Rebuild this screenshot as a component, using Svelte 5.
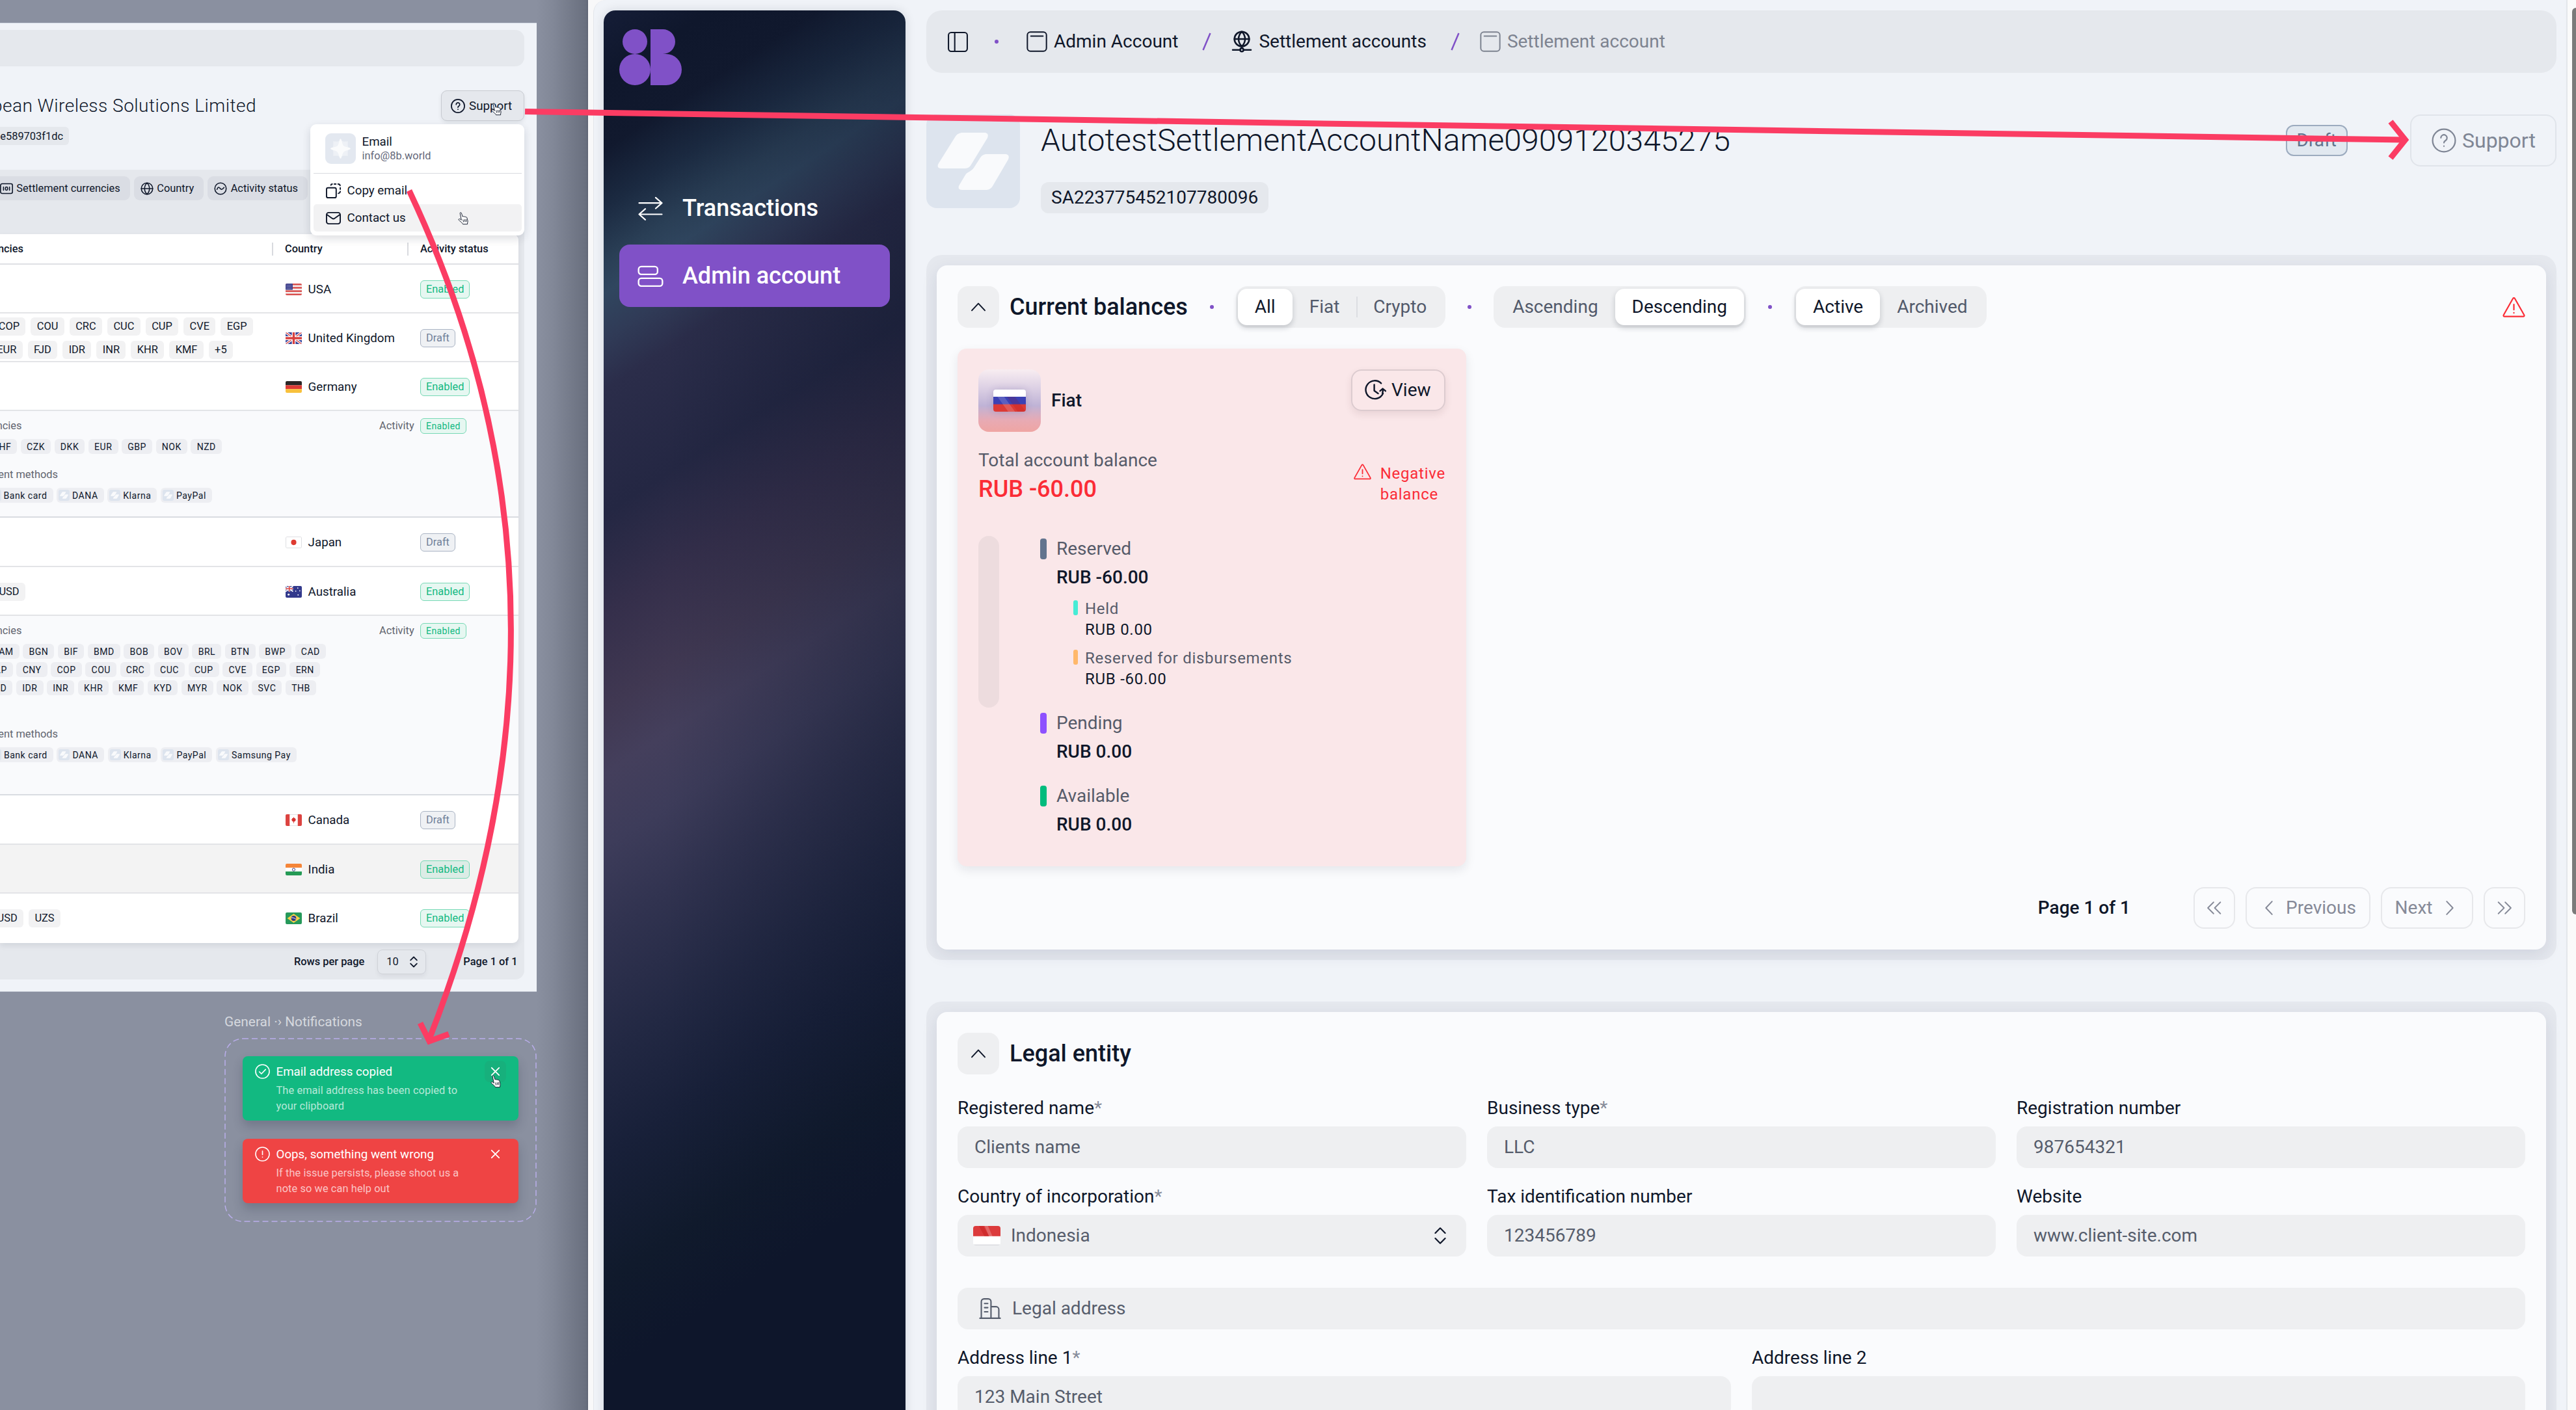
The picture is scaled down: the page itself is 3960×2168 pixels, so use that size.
<script lang="ts">
    const headerCrumbs = [
        { icon: 'window', label: 'Admin Account', muted: false },
        { icon: 'network', label: 'Settlement accounts', muted: false },
        { icon: 'window', label: 'Settlement account', muted: true }
    ];

    const filters = [
        { icon: 'cash', label: 'Settlement currencies' },
        { icon: 'globe', label: 'Country' },
        { icon: 'activity', label: 'Activity status' }
    ];

    type Chip = string;
    type Row = {
        country?: string;
        flag?: string;
        status: 'Enabled' | 'Draft';
        chips?: Chip[][];
        ends?: number[];
        methods?: string[];
        methodsEnd?: number;
        height: number;
        hovered?: boolean;
    };

    const rows: Row[] = [
        { country: 'USA', flag: 'us', status: 'Enabled', height: 75 },
        {
            country: 'United Kingdom', flag: 'gb', status: 'Draft', height: 75,
            chips: [
                ['COP', 'COU', 'CRC', 'CUC', 'CUP', 'CVE', 'EGP'],
                ['EUR', 'FJD', 'IDR', 'INR', 'KHR', 'KMF', '+5']
            ],
            ends: [389, 358]
        },
        { country: 'Germany', flag: 'de', status: 'Enabled', height: 75 },
        {
            status: 'Enabled', height: 164,
            chips: [['CHF', 'CZK', 'DKK', 'EUR', 'GBP', 'NOK', 'NZD']],
            ends: [341],
            methods: ['Bank card', 'DANA', 'Klarna', 'PayPal'], methodsEnd: 326
        },
        { country: 'Japan', flag: 'jp', status: 'Draft', height: 75.5 },
        { country: 'Australia', flag: 'au', status: 'Enabled', height: 75.5, chips: [['USD']], ends: [39] },
        {
            status: 'Enabled', height: 276,
            chips: [
                ['BAM', 'BGN', 'BIF', 'BMD', 'BOB', 'BOV', 'BRL', 'BTN', 'BWP', 'CAD'],
                ['CLP', 'CNY', 'COP', 'COU', 'CRC', 'CUC', 'CUP', 'CVE', 'EGP', 'ERN'],
                ['FJD', 'IDR', 'INR', 'KHR', 'KMF', 'KYD', 'MYR', 'NOK', 'SVC', 'THB']
            ],
            ends: [501, 492, 486],
            methods: ['Bank card', 'DANA', 'Klarna', 'PayPal', 'Samsung Pay'], methodsEnd: 456
        },
        { country: 'Canada', flag: 'ca', status: 'Draft', height: 75.5 },
        { country: 'India', flag: 'in', status: 'Enabled', height: 75, hovered: true },
        { country: 'Brazil', flag: 'br', status: 'Enabled', height: 76.5, chips: [['USD', 'UZS']], ends: [93] }
    ];

    const toasts = [
        { kind: 'success', icon: 'check', title: 'Email address copied', lines: ['The email address has been copied to', 'your clipboard'] },
        { kind: 'error', icon: 'alert', title: 'Oops, something went wrong', lines: ['If the issue persists, please shoot us a', 'note so we can help out'] }
    ];

    const segments = [
        { items: ['All', 'Fiat', 'Crypto'], active: 'All' },
        { items: ['Ascending', 'Descending'], active: 'Descending' },
        { items: ['Active', 'Archived'], active: 'Active' }
    ];

    const legend = [
        {
            name: 'Reserved', value: 'RUB -60.00', color: 'slate',
            children: [
                { name: 'Held', value: 'RUB 0.00', color: 'teal' },
                { name: 'Reserved for disbursements', value: 'RUB -60.00', color: 'orange' }
            ]
        },
        { name: 'Pending', value: 'RUB 0.00', color: 'violet', children: [] },
        { name: 'Available', value: 'RUB 0.00', color: 'green', children: [] }
    ];

    const fields = [
        { label: 'Registered name', required: true, value: 'Clients name' },
        { label: 'Business type', required: true, value: 'LLC' },
        { label: 'Registration number', value: '987654321' },
        { label: 'Country of incorporation', required: true, value: 'Indonesia', flag: 'id' },
        { label: 'Tax identification number', value: '123456789' },
        { label: 'Website', value: 'www.client-site.com' }
    ];

    const addressFields = [
        { label: 'Address line 1', required: true, value: '123 Main Street' },
        { label: 'Address line 2', value: '' }
    ];
</script>

{#snippet icon(name: string, size: number, stroke: number = 1.5)}
    <svg class="icon" width={size} height={size} viewBox="0 0 24 24" fill="none" stroke="currentColor" stroke-width={stroke} stroke-linecap="round" stroke-linejoin="round">
        {#if name === 'help'}
            <circle cx="12" cy="12" r="11" />
            <path d="M9 9.4a3 3 0 1 1 4.6 2.6c-1 .6-1.600 1.100-1.600 2.200M12 17.500v.1" />
        {:else if name === 'window'}
            <rect x="1" y="1" width="22" height="22" rx="3.500" />
            <path d="M5 5.700h14" />
        {:else if name === 'panel'}
            <rect x="1.500" y="1.500" width="21" height="21" rx="3" />
            <path d="M8.500 1.500v21" />
        {:else if name === 'network'}
            <circle cx="12" cy="9" r="8.500" />
            <path d="M3.500 9h17M12 .5c-5 5-5 12 0 17M12 .5c5 5 5 12 0 17M12 17.500v2M1.500 21.500h8.500M14 21.500h8.500" />
            <circle cx="12" cy="21.500" r="1.900" />
        {:else if name === 'cash'}
            <rect x="1" y="3" width="22" height="18" rx="3" />
            <path d="M6.500 9v6M17.500 9v6" />
            <rect x="10" y="9" width="4" height="6" rx="2" />
        {:else if name === 'globe'}
            <circle cx="12" cy="12" r="10.500" />
            <path d="M1.500 12h21M12 1.500c-6 6-6 15 0 21M12 1.500c6 6 6 15 0 21" />
        {:else if name === 'activity'}
            <circle cx="12" cy="12" r="10.500" />
            <path d="M5.500 13.500c2-5 3.500-4.500 5.500-2s3.500 3.500 7.500-1.500" />
        {:else if name === 'copy'}
            <rect x="1" y="7" width="15.500" height="16" rx="2.500" />
            <path d="M8 2.800C8.300 1.500 9 1 10.200 1M13.500 1h2.500M19.500 1c2 0 3 .8 3.300 2.500M23 7v2.500M23 13c-.3 2-1.200 2.800-3 3" />
        {:else if name === 'mail'}
            <rect x="1" y="3" width="22" height="18" rx="3.500" />
            <path d="M2 6.500l8 5.800c1.300.9 2.700.9 4 0l8-5.800" />
        {:else if name === 'check'}
            <circle cx="12" cy="12" r="11" />
            <path d="M7 12.500l3.400 3.200L17 8.800" />
        {:else if name === 'alert'}
            <circle cx="12" cy="12" r="11" />
            <path d="M12 7v6M12 16.700v.3" />
        {:else if name === 'close'}
            <path d="M4 4l16 16M20 4L4 20" />
        {:else if name === 'warning'}
            <path d="M12 2.200c.5 0 .8.2 1 .6l9.800 17.300c.5.900 0 1.600-1 1.600H2.200c-1 0-1.500-.7-1-1.600L11 2.800c.2-.4.5-.6 1-.6zM12 9v5.500M12 17.800v.2" />
        {:else if name === 'swap'}
            <path d="M1.500 7.300h21M16.800 2.300l5.700 5-5.700 5M22.500 17.700h-21M7.200 12.700l-5.700 5 5.700 5" />
        {:else if name === 'stack'}
            <rect x="1" y="3.500" width="17.500" height="7.200" rx="2.500" />
            <rect x="1" y="14.300" width="22" height="7.200" rx="2.500" />
        {:else if name === 'history'}
            <path d="M18.500 4.500A9.800 9.800 0 1 0 20.500 15.500M11 6v6.500l4.200 3M17.300 12.800l2.900-2.500 3 2.500M20.200 10.500c.3 2 .2 3.500-.3 5" />
        {:else if name === 'up'}
            <path d="M4.500 16L12 8l7.500 8" />
        {:else if name === 'updown'}
            <path d="M5.500 8.500L12 2l6.500 6.500M5.500 15.500L12 22l6.500-6.500" />
        {:else if name === 'left'}
            <path d="M16 3.500L8 12l8 8.500" />
        {:else if name === 'right'}
            <path d="M8 3.500l8 8.500-8 8.500" />
        {:else if name === 'first'}
            <path d="M11 4.500L3.500 12l7.500 7.500M20 4.500L12.500 12l7.500 7.500" />
        {:else if name === 'last'}
            <path d="M4 4.500l7.500 7.500L4 19.500M13 4.500l7.500 7.500-7.500 7.500" />
        {:else if name === 'building'}
            <path d="M1 22.500h22M2.500 22.500v-18a3 3 0 0 1 3-3h4.500a3 3 0 0 1 3 3v18M13 10h5.500a3 3 0 0 1 3 3v9.500M6 6.500h3.500M6 11h3.500M6 15.500h3.500" />
        {/if}
    </svg>
{/snippet}

{#snippet flag(code: string)}
    <svg class="flag" viewBox="0 0 24 17" preserveAspectRatio="none">
        {#if code === 'us'}
            <rect width="24" height="17" fill="#f5f0f0" />
            {#each [0, 4.9, 9.8, 14.700] as y}
                <rect {y} width="24" height="2.400" fill="#d9504e" />
            {/each}
            <rect width="10.500" height="9" fill="#3b3f8c" />
            <path d="M1.500 2.200h8M1.500 4.500h8M1.500 6.800h8" stroke="#c9c9e6" stroke-width=".8" stroke-dasharray="1 1" />
        {:else if code === 'gb'}
            <rect width="24" height="17" fill="#34439a" />
            <path d="M0 0l24 17M24 0L0 17" stroke="#fff" stroke-width="3.600" />
            <path d="M0 0l24 17M24 0L0 17" stroke="#d8403f" stroke-width="1.300" />
            <path d="M12 0v17M0 8.500h24" stroke="#fff" stroke-width="5.500" />
            <path d="M12 0v17M0 8.500h24" stroke="#d8403f" stroke-width="3.200" />
        {:else if code === 'de'}
            <rect width="24" height="6" fill="#2a2626" />
            <rect y="6" width="24" height="5.500" fill="#dd3a35" />
            <rect y="11.500" width="24" height="5.500" fill="#f8c13c" />
        {:else if code === 'jp'}
            <rect x=".5" y=".5" width="23" height="16" rx="1.500" fill="#fff" stroke="#dfe0e3" />
            <circle cx="12" cy="8.500" r="3.900" fill="#de3a30" />
        {:else if code === 'au'}
            <rect width="24" height="17" fill="#32398c" />
            <path d="M0 0l11 8M11 0L0 8" stroke="#fff" stroke-width="1.600" />
            <path d="M5.500 0v8M0 4h11" stroke="#fff" stroke-width="2.800" />
            <path d="M5.500 0v8M0 4h11" stroke="#d8403f" stroke-width="1.500" />
            <g fill="#fff">
                <circle cx="4.500" cy="12.500" r="1.400" /><circle cx="18" cy="3" r=".8" /><circle cx="21" cy="7" r=".8" />
                <circle cx="15" cy="7.500" r=".8" /><circle cx="18.500" cy="13" r=".9" />
            </g>
        {:else if code === 'ca'}
            <rect width="24" height="17" fill="#fff" />
            <path d="M6 .4h12M6 16.600h12" stroke="#dadbdf" stroke-width=".8" />
            <rect width="6" height="17" fill="#dc4340" /><rect x="18" width="6" height="17" fill="#dc4340" />
            <path d="M12 4l1.200 2 1.300-.4-.3 2 1.600-.2-2.300 3.300h-1.100V13h-.8v-2.300h-1.100L8.200 7.400l1.600.2-.3-2 1.300.4z" fill="#d7302d" />
        {:else if code === 'in'}
            <rect width="24" height="6" fill="#f58538" />
            <rect y="6" width="24" height="5.300" fill="#fff" />
            <rect y="11.300" width="24" height="5.700" fill="#249a55" />
            <circle cx="12" cy="8.600" r="2" fill="none" stroke="#33347f" stroke-width=".9" />
        {:else if code === 'br'}
            <rect width="24" height="17" fill="#26995a" />
            <path d="M12 2l9.500 6.500L12 15 2.500 8.500z" fill="#f8cf4a" />
            <circle cx="12" cy="8.500" r="3.700" fill="#31377f" />
            <path d="M8.600 7.500c2.500 0 5 .8 6.800 2.400" stroke="#fff" stroke-width=".9" fill="none" />
        {:else if code === 'ru'}
            <rect width="24" height="6" fill="#fff" />
            <rect y="5.500" width="24" height="6" fill="#3c41b4" />
            <rect y="11.300" width="24" height="5.700" fill="#dc3a35" />
            <path d="M3 5.500h5l8 11.500h-5z" fill="#fff" opacity=".16" />
            <path d="M10 5.500h6l8 11.500h-6z" fill="#900" opacity=".14" />
        {:else if code === 'id'}
            <rect width="24" height="9" fill="#dc3b3c" />
            <rect y="9" width="24" height="8" fill="#fff" />
            <path d="M5 0h4l5 9h-4z" fill="#a00" opacity=".25" />
            <path d="M10 0h3l4 9h-3z" fill="#fff" opacity=".22" />
            <path d="M0 16.600h24" stroke="#dadbdf" stroke-width="1" />
        {/if}
    </svg>
{/snippet}

{#snippet stripes()}
    <svg class="stripes" viewBox="0 0 144 144" fill="#f9fafc">
        <path d="M56 28h33c5 0 7 3 5 8L69 77c-3 5-6 6-11 6H23c-5 0-7-3-4-8l25-40c3-5 7-7 12-7z" />
        <path d="M93 61h28c5 0 7 3 5 8l-24 41c-3 5-7 6-11 6H55c-5 0-7-3-4-8l9-15c3-5 9-5 13-11l9-14c3-5 6-7 11-7z" />
    </svg>
{/snippet}

{#snippet hand()}
    <svg class="hand" viewBox="0 0 18 20" fill="#fff" stroke="#1b2233" stroke-width="1" stroke-linejoin="round">
        <path d="M4.200 2.200c-.4-1.600 1.700-2 2.100-.6l1.900 5.600c.6-1 2-.8 2.300.2.700-.8 2-.5 2.200.5.900-.5 2 0 2.200 1.100l1.200 4.700c.3 1.300-.4 2.200-.5 3.200v1.800H8.500c-.6-1.900-2.700-3.400-4.500-4.800-.9-.7-2.300-1.700-1.900-2.700.4-.9 1.700-.7 2.500-.1l1.700 1.200z" />
        <path d="M8.700 11.500l1 4M11.200 11.200l.8 4M13.500 11l.5 4" />
    </svg>
{/snippet}

{#snippet chip(label: string, method: boolean = false)}
    <span class="chip" class:method>
        {#if method}<span class="method-logo">{@render stripes()}</span>{/if}{label}
    </span>
{/snippet}

<div class="screen">
    <section class="canvas">
        <div class="artboard">
            <div class="board-bar"></div>
            <div class="board-heading">
                <div class="board-title">Pan-European Wireless Solutions Limited</div>
                <button class="board-support">
                    {@render icon('help', 22, 1.9)}<span>Support</span>
                    <span class="cursor on-support">{@render hand()}</span>
                </button>
            </div>
            <div class="board-id"><span>e589703f1dc</span></div>

            <div class="board-panel">
                <div class="filters">
                    {#each filters as filter}
                        <span class="filter">{@render icon(filter.icon, 20, 1.9)}{filter.label}</span>
                    {/each}
                </div>
                <div class="table">
                    <div class="table-head">
                        <span class="head-left">Currencies</span>
                        <span class="head-cell country">Country</span>
                        <span class="head-cell">Activity status</span>
                    </div>
                    {#each rows as row}
                        {#if row.country}
                            <div class="row" class:hovered={row.hovered} style="height: {row.height}px">
                                <div class="row-chips">
                                    {#each row.chips ?? [] as line, i}
                                        <div class="chip-line" style="width: {row.ends?.[i]}px">
                                            {#each line as code}{@render chip(code)}{/each}
                                        </div>
                                    {/each}
                                </div>
                                <div class="row-country">{@render flag(row.flag ?? '')}{row.country}</div>
                                <span class="badge {row.status.toLowerCase()}">{row.status}</span>
                            </div>
                        {:else}
                            <div class="detail" style="height: {row.height}px">
                                <div class="detail-top">
                                    <span class="detail-label currencies">Currencies</span>
                                    <span class="detail-activity">Activity</span>
                                    <span class="badge small enabled">{row.status}</span>
                                </div>
                                <div class="detail-chips">
                                    {#each row.chips ?? [] as line, i}
                                        <div class="chip-line" style="width: {row.ends?.[i]}px">
                                            {#each line as code}{@render chip(code)}{/each}
                                        </div>
                                    {/each}
                                </div>
                                <div class="detail-methods" class:spaced={row.height > 200}>
                                    <span class="detail-label methods">Payment methods</span>
                                    <div class="chip-line" style="width: {row.methodsEnd}px">
                                        {#each row.methods ?? [] as method}{@render chip(method, true)}{/each}
                                    </div>
                                </div>
                            </div>
                        {/if}
                    {/each}
                </div>
                <div class="table-footer">
                    <span>Rows per page</span>
                    <span class="page-size">10 {@render icon('updown', 18, 2.4)}</span>
                    <span class="page-of">Page 1 of 1</span>
                </div>
            </div>

            <div class="menu">
                <div class="menu-contact">
                    <div class="menu-logo">
                        <svg viewBox="0 0 46 46">
                            <path d="M23 9c2 5 9 3 11 3 0 3-1 8 2 11-3 3-2 8-2 11-3 0-8-1-11 2-3-3-8-2-11-2 0-3 1-8-2-11 3-3 2-8 2-11 3 0 9 2 11-3z" fill="#eef1f6" />
                            <path d="M23 8c2 0 2 9 5 11 3 2 10 2 10 4s-7 2-10 5c-3 3-3 10-5 10s-2-7-5-10c-3-3-10-3-10-5s7-2 10-4c3-2 3-11 5-11z" fill="#fafbfc" />
                        </svg>
                    </div>
                    <div>
                        <div class="menu-title">Email</div>
                        <div class="menu-mail">info@8b.world</div>
                    </div>
                </div>
                <div class="menu-item">{@render icon('copy', 23, 2)}Copy email</div>
                <div class="menu-item hovered">
                    {@render icon('mail', 23, 2)}Contact us
                    <span class="cursor on-contact">{@render hand()}</span>
                </div>
            </div>
        </div>

        <div class="notes">
            <div class="notes-title">General ·› Notifications</div>
            <div class="notes-frame">
                <svg class="dashes" width="480" height="283"><rect x="1" y="1" width="478" height="281" rx="27" /></svg>
                {#each toasts as toast}
                    <div class="toast {toast.kind}">
                        <div class="toast-icon">{@render icon(toast.icon, 23, 1.7)}</div>
                        <div class="toast-body">
                            <div class="toast-title">{toast.title}</div>
                            {#each toast.lines as line}<div class="toast-line">{line}</div>{/each}
                        </div>
                        <div class="toast-close">
                            {@render icon('close', 17, 2.6)}
                            {#if toast.kind === 'success'}<span class="cursor on-close">{@render hand()}</span>{/if}
                        </div>
                    </div>
                {/each}
            </div>
        </div>
    </section>

    <section class="browser">
        <div class="page">
            <aside class="sidebar">
                <svg class="logo" width="96" height="86" viewBox="0 0 96 86" fill="#8051c7">
                    <circle cx="24" cy="19" r="19" /><circle cx="24" cy="62" r="24" />
                    <path d="M48 0h19a19 19 0 0 1 0 38h5a24 24 0 0 1 0 48H48z" />
                </svg>
                <nav>
                    <a class="nav-item" href="#transactions">{@render icon('swap', 40, 1.3)}Transactions</a>
                    <a class="nav-item active" href="#admin">{@render icon('stack', 40, 1.4)}Admin account</a>
                </nav>
            </aside>

            <main>
                <header class="topbar">
                    {@render icon('panel', 33, 1.5)}
                    <span class="dot"></span>
                    {#each headerCrumbs as crumb, i}
                        {#if i > 0}
                            <svg class="slash" width="14" height="28"><path d="M1.500 27L12.500 1" stroke="#8051c7" stroke-width="2.500" /></svg>
                        {/if}
                        <span class="crumb" class:muted={crumb.muted}>{@render icon(crumb.icon, 32, crumb.icon === 'network' ? 1.9 : 1.5)}{crumb.label}</span>
                    {/each}
                </header>

                <div class="account">
                    <div class="account-logo">{@render stripes()}</div>
                    <div class="account-info">
                        <div class="account-line">
                            <h1>AutotestSettlementAccountName0909120345275</h1>
                            <span class="account-status">Draft</span>
                            <button class="support">{@render icon('help', 38, 1.4)}Support</button>
                        </div>
                        <span class="account-id">SA223775452107780096</span>
                    </div>
                </div>

                <section class="panel">
                    <div class="panel-body balances">
                        <div class="panel-head">
                            <span class="collapse">{@render icon('up', 32, 1.5)}</span>
                            <h2>Current balances</h2>
                            {#each segments as segment}
                                <span class="dot"></span>
                                <div class="segment">
                                    {#each segment.items as item}
                                        <span class="seg-item" class:active={item === segment.active} class:divided={item === 'Crypto'}>{item}</span>
                                    {/each}
                                </div>
                            {/each}
                            <span class="panel-warning">{@render icon('warning', 35, 1.5)}</span>
                        </div>

                        <article class="card">
                            <div class="card-top">
                                <div class="card-flag">{@render flag('ru')}</div>
                                <strong>Fiat</strong>
                                <button class="view">{@render icon('history', 34, 1.7)}View</button>
                            </div>
                            <div class="card-total">
                                <div>
                                    <div class="total-label">Total account balance</div>
                                    <div class="total-value">RUB -60.00</div>
                                </div>
                                <div class="negative">{@render icon('warning', 27, 1.6)}<span>Negative<br />balance</span></div>
                            </div>
                            <div class="card-split">
                                <div class="split-bar"></div>
                                <div class="legend">
                                    {#each legend as entry}
                                        <div class="entry">
                                            <div class="entry-name"><i class="mark {entry.color}"></i>{entry.name}</div>
                                            <div class="entry-value">{entry.value}</div>
                                            {#if entry.children.length}
                                                <div class="children">
                                                    {#each entry.children as child}
                                                        <div class="child">
                                                            <div class="child-name"><i class="mark thin {child.color}"></i>{child.name}</div>
                                                            <div class="child-value">{child.value}</div>
                                                        </div>
                                                    {/each}
                                                </div>
                                            {/if}
                                        </div>
                                    {/each}
                                </div>
                            </div>
                        </article>

                        <div class="pagination">
                            <strong>Page 1 of 1</strong>
                            <button class="square">{@render icon('first', 28, 1.6)}</button>
                            <button class="prev">{@render icon('left', 28, 1.7)}Previous</button>
                            <button class="next">Next{@render icon('right', 28, 1.7)}</button>
                            <button class="square">{@render icon('last', 28, 1.6)}</button>
                        </div>
                    </div>
                </section>

                <section class="panel legal">
                    <div class="panel-body">
                        <div class="panel-head">
                            <span class="collapse">{@render icon('up', 32, 1.5)}</span>
                            <h2>Legal entity</h2>
                        </div>
                        <div class="fields">
                            {#each fields as field}
                                <div class="field">
                                    <div class="label">{field.label}{#if field.required}<sup>*</sup>{/if}</div>
                                    <div class="input">
                                        {#if field.flag}{@render flag(field.flag)}{/if}
                                        <span>{field.value}</span>
                                        {#if field.flag}{@render icon('updown', 28, 1.9)}{/if}
                                    </div>
                                </div>
                            {/each}
                        </div>
                        <div class="input address-head">{@render icon('building', 34, 1.5)}<span>Legal address</span></div>
                        <div class="fields two">
                            {#each addressFields as field}
                                <div class="field">
                                    <div class="label">{field.label}{#if field.required}<sup>*</sup>{/if}</div>
                                    <div class="input"><span>{field.value}</span></div>
                                </div>
                            {/each}
                        </div>
                    </div>
                </section>
            </main>
        </div>
        <div class="scroll-track"><div class="scroll-thumb"></div></div>
    </section>

    <svg class="annotations" width="3960" height="2168" fill="none" stroke="#fb3c63" stroke-width="9">
        <path d="M807 171.500L3697 215" />
        <path d="M3675 187l22.500 28-22.500 28" />
        <path d="M629 293Q926 922 659 1600" />
        <path d="M646 1573l14 28 30-11" />
    </svg>
</div>

<style>
    :global(body) {
        margin: 0;
        overflow: hidden;
    }

    .screen {
        position: relative;
        display: flex;
        width: 3960px;
        height: 2168px;
        overflow: hidden;
        background: #8a90a0;
        color: #0f172a;
        font-family: Roboto, 'Liberation Sans', sans-serif;
        font-size: 28px;
        line-height: 40px;
    }

    .screen *,
    .screen :global(svg) {
        box-sizing: border-box;
        flex-shrink: 0;
    }

    button {
        font: inherit;
        color: inherit;
        background: none;
        padding: 0;
        white-space: nowrap;
    }

    .icon,
    .flag,
    .stripes,
    .hand {
        display: block;
    }

    .icon {
        overflow: visible;
    }

    .annotations {
        position: absolute;
        inset: 0;
    }

    /* design canvas on the left */
    .canvas {
        width: 904px;
        padding-top: 35px;
        background: linear-gradient(90deg, transparent 825px, rgba(70, 76, 90, 0.12) 850px, rgba(70, 76, 90, 0.5) 904px);
        font-size: 18.75px;
        line-height: 24px;
    }

    .artboard {
        position: relative;
        width: 825px;
        height: 1490px;
        padding: 10px 19px 0 0;
        background: #f0f3f8;
        border-top: 1px solid #d3dae5;
        border-bottom: 1px solid #ccd2dc;
    }

    .board-bar {
        height: 56px;
        border-radius: 0 14px 14px 0;
        background: #e5e8ed;
    }

    .board-heading {
        display: flex;
        align-items: center;
        height: 47px;
        margin-top: 37px;
    }

    .board-title {
        display: flex;
        justify-content: flex-end;
        width: 394px;
        font-size: 28.1px;
        font-weight: 300;
        letter-spacing: 0.45px;
        white-space: nowrap;
    }

    .board-support {
        position: relative;
        display: flex;
        align-items: center;
        gap: 6px;
        width: 128px;
        height: 47px;
        margin-left: auto;
        padding-left: 14px;
        border: 1.5px solid #c8cbd1;
        border-radius: 9px;
        background: #e5e8ed;
        box-shadow: 0 3px 6px rgba(15, 23, 42, 0.08);
    }

    .board-id {
        display: flex;
        justify-content: flex-end;
        width: 106px;
        height: 28px;
        margin-top: 9px;
        padding-right: 9px;
        border-radius: 0 6px 6px 0;
        background: #e5e8ed;
        font-size: 16.4px;
        line-height: 29px;
    }

    .board-panel {
        height: 1245px;
        margin-top: 38px;
        padding: 10px 9px 0 0;
        border-radius: 0 0 14px 0;
        background: #e5e8ed;
    }

    .filters {
        display: flex;
        justify-content: flex-end;
        gap: 6px;
        width: 473px;
        height: 37px;
    }

    .filter {
        display: flex;
        align-items: center;
        gap: 5.5px;
        padding: 0 15px 0 10px;
        border-radius: 9px;
        background: #dadde4;
        font-size: 16.4px;
        white-space: nowrap;
    }

    .table {
        height: 1090px;
        margin-top: 52px;
        border-radius: 0 9px 9px 0;
        background: #fff;
        box-shadow: 0 4px 10px rgba(15, 23, 42, 0.09);
        overflow: hidden;
    }

    .table-head {
        display: flex;
        align-items: center;
        height: 47px;
        padding-top: 1px;
        border-bottom: 2px solid #dfe0e4;
        font-size: 16.4px;
        font-weight: 500;
    }

    .head-left {
        display: flex;
        justify-content: flex-end;
        width: 36px;
        margin-right: 382px;
    }

    .head-cell {
        height: 20px;
        padding-left: 18px;
        border-left: 2px solid #d8dadf;
        line-height: 20px;
    }

    .head-cell.country {
        width: 208px;
    }

    .row {
        display: flex;
        align-items: center;
        padding-top: 3px;
        border-bottom: 2px solid #e3e4e7;
    }

    .row:last-child {
        padding-top: 1px;
        border: 0;
    }

    .row.hovered {
        background: #f3f3f3;
    }

    .row-chips {
        display: flex;
        flex-direction: column;
        gap: 8px;
        width: 439px;
    }

    .chip-line {
        display: flex;
        justify-content: flex-end;
        gap: 8px;
        height: 28px;
    }

    .chip {
        display: flex;
        align-items: center;
        padding: 0 9.4px;
        border-radius: 6px;
        background: #f2f2f3;
        font-size: 16.4px;
        white-space: nowrap;
    }

    .row-country {
        display: flex;
        align-items: center;
        gap: 9.6px;
        width: 207px;
    }

    .row-country .flag {
        width: 25px;
        height: 18px;
        border-radius: 2px;
    }

    .badge {
        height: 28px;
        padding: 0 8px;
        border: 1.5px solid #77d9b5;
        border-radius: 6px;
        background: #e6f7f1;
        color: #12b981;
        font-size: 16.4px;
        line-height: 26px;
    }

    .badge.small {
        height: 24px;
        font-size: 14.06px;
        letter-spacing: 0.4px;
        line-height: 22px;
    }

    .badge.draft {
        border-color: #aab4c4;
        background: #eff1f4;
        color: #71819a;
    }

    .hovered .badge {
        background: #dcece6;
    }

    .detail {
        padding-top: 11px;
        border-bottom: 2px solid #d9dce1;
        background: #f9fafc;
        color: #62656f;
        font-size: 16.4px;
    }

    .detail-top {
        display: flex;
        align-items: center;
        height: 24px;
    }

    .detail-label {
        display: flex;
        justify-content: flex-end;
        white-space: nowrap;
    }

    .detail-label.currencies {
        width: 33.5px;
    }

    .detail-label.methods {
        width: 89px;
        margin-bottom: 8px;
    }

    .detail-activity {
        width: 53px;
        margin: 0 10px 0 549.5px;
    }

    .detail-chips {
        display: flex;
        flex-direction: column;
        gap: 5px;
        margin-top: 8px;
    }

    .detail-methods {
        margin-top: 20px;
    }

    .detail-methods.spaced {
        margin-top: 48px;
    }

    .detail .chip-line {
        gap: 5.5px;
        height: 23px;
    }

    .detail .chip {
        padding: 0 9.2px;
        background: #edeef2;
        color: #0f172a;
        font-size: 14.06px;
        letter-spacing: 0.5px;
    }

    .detail .chip.method {
        gap: 4px;
        padding-left: 3px;
    }

    .method-logo {
        width: 17px;
        height: 17px;
        border-radius: 3px;
        background: #dde4ee;
    }

    .table-footer {
        display: flex;
        align-items: center;
        height: 57px;
        padding-left: 452px;
        font-size: 16.4px;
        font-weight: 500;
        white-space: nowrap;
    }

    .page-size {
        display: flex;
        align-items: center;
        justify-content: space-between;
        width: 75px;
        height: 38px;
        margin: 0 57px 0 20px;
        padding: 0 9px 0 13px;
        border: 1.5px solid #cfd2d8;
        border-radius: 8px;
        font-weight: 400;
        box-shadow: 0 4px 6px rgba(15, 23, 42, 0.05);
    }

    .menu {
        position: absolute;
        top: 155px;
        right: 19px;
        width: 329px;
        height: 171px;
        padding: 0 4.5px;
        border-radius: 9px;
        background: #fff;
        box-shadow: 0 5px 14px rgba(15, 23, 42, 0.14);
    }

    .menu-contact {
        display: flex;
        align-items: center;
        gap: 10px;
        height: 76px;
        padding: 0 0 1px 18px;
        border-bottom: 1px solid #d9dbe0;
    }

    .menu-logo {
        width: 47px;
        height: 47px;
        border-radius: 9px;
        background: #e3e8f0;
    }

    .menu-mail {
        color: #64687a;
        font-size: 16.4px;
        line-height: 20px;
    }

    .menu-item {
        position: relative;
        display: flex;
        align-items: center;
        gap: 10px;
        height: 42px;
        margin-top: 5px;
        padding-left: 19px;
    }

    .menu-item.hovered {
        margin-top: 0;
        border-radius: 5px;
        background: #f2f2f3;
    }

    .cursor {
        position: absolute;
        width: 18px;
        height: 20px;
    }

    .cursor.on-support {
        top: 18px;
        left: 75px;
    }

    .cursor.on-contact {
        top: 12px;
        left: 221px;
    }

    .cursor.on-close {
        top: 22px;
        left: 8px;
    }

    .notes {
        margin: 36px 0 0 345px;
    }

    .notes-title {
        height: 35px;
        color: #d5d8de;
        font-size: 20.9px;
        line-height: 20px;
    }

    .notes-frame {
        position: relative;
        display: flex;
        flex-direction: column;
        gap: 28px;
        width: 480px;
        height: 283px;
        padding: 28px;
    }

    .dashes {
        position: absolute;
        inset: 0;
        fill: none;
        stroke: #b9adea;
        stroke-width: 1.5;
        stroke-dasharray: 9 5;
    }

    .toast {
        display: flex;
        width: 424px;
        height: 99px;
        padding: 7px 0 0 19px;
        border-radius: 8px;
        color: #fff;
        box-shadow: 0 9px 16px rgba(30, 35, 60, 0.22);
    }

    .toast.success {
        background: #12b981;
    }

    .toast.error {
        background: #ef4444;
    }

    .toast-icon {
        width: 32.5px;
        padding-top: 5px;
    }

    .toast-body {
        width: 320px;
    }

    .toast-title {
        height: 31px;
        line-height: 34px;
    }

    .toast-line {
        height: 23.6px;
        color: rgba(255, 255, 255, 0.7);
        font-size: 16.4px;
        letter-spacing: 0.08px;
        line-height: 30px;
    }

    .toast-close {
        position: relative;
        display: flex;
        align-items: center;
        justify-content: center;
        width: 33px;
        height: 33px;
        border-radius: 8px;
    }

    .success .toast-close {
        background: #17b07c;
    }

    /* application window */
    .browser {
        display: flex;
        width: 3056px;
        padding-left: 8px;
        background: #f8f8f9;
        box-shadow: -1px 0 2px #5c6272;
    }

    .page {
        display: flex;
        width: 3035px;
        height: 2200px;
        padding: 16px 17px 0 15px;
        border: 1px solid #e3e6eb;
        border-width: 0 2px 0 1px;
        border-radius: 20px 0 0 0;
        background: #f0f3f8;
    }

    .scroll-track {
        width: 13px;
        padding: 12px 0 0 7px;
        background: #fafafa;
    }

    .scroll-thumb {
        width: 12px;
        height: 1394px;
        border-radius: 6px;
        background: #7a7a7a;
    }

    .sidebar {
        width: 464px;
        padding: 29px 24px 0;
        border-radius: 18px 18px 0 0;
        background:
            linear-gradient(90deg, rgba(14, 22, 43, 0) 20%, rgba(14, 22, 43, 0.38)),
            linear-gradient(147deg, #151d37 0, #0f172c 90px, #11192e 180px, #1b2a41 255px, #2a3f56 325px, #30465f 365px, #303b57 425px, #2b2d4a 490px, #242743 650px, #352f4b 780px, #403852 900px, #443f5c 985px, #3d3c5a 1080px, #313350 1190px, #222843 1350px, #182039 1480px, #101a2c 1640px, #0e162b 1760px);
        box-shadow: 0 0 16px rgba(15, 23, 42, 0.12);
    }

    .logo {
        display: block;
    }

    nav {
        display: flex;
        flex-direction: column;
        gap: 8px;
        margin-top: 141px;
    }

    .nav-item {
        display: flex;
        align-items: center;
        gap: 29px;
        height: 96px;
        padding-left: 28px;
        border-radius: 16px;
        color: #fff;
        font-size: 36px;
        font-weight: 500;
        text-decoration: none;
    }

    .nav-item.active {
        background: #8051c7;
    }

    main {
        width: 2506px;
        margin-left: 32px;
    }

    .topbar {
        display: flex;
        align-items: center;
        height: 96px;
        padding-left: 32px;
        border-radius: 24px;
        background: #e5e8ed;
    }

    .dot {
        width: 6px;
        height: 6px;
        border-radius: 50%;
        background: #8051c7;
    }

    .topbar .dot {
        margin: 0 43px 0 40px;
    }

    .crumb {
        display: flex;
        align-items: center;
        gap: 10px;
    }

    .crumb.muted {
        color: #7d8390;
    }

    .slash {
        margin: 0 31px 0 37px;
    }

    .account {
        display: flex;
        gap: 32px;
        margin-top: 64px;
    }

    .account-logo {
        width: 144px;
        height: 144px;
        border-radius: 16px;
        background: #dde4ee;
    }

    .account-info {
        flex: 1;
    }

    .account-line {
        display: flex;
        align-items: center;
        height: 80px;
    }

    h1 {
        flex: 1;
        margin: 0;
        font-size: 48px;
        font-weight: 300;
        letter-spacing: 0.12px;
    }

    .account-status {
        height: 48px;
        padding: 0 15px;
        border: 2px solid #9cabbf;
        border-radius: 12px;
        background: #e1e8f0;
        color: #62748e;
        line-height: 44px;
    }

    .support {
        display: flex;
        align-items: center;
        gap: 9px;
        width: 225px;
        height: 80px;
        margin-left: 96px;
        padding-left: 31px;
        border: 2px solid #e0e4ea;
        border-radius: 16px;
        color: #7f8695;
        font-size: 32px;
    }

    .account-id {
        display: block;
        width: fit-content;
        height: 48px;
        margin-top: 24px;
        padding: 0 16px;
        border-radius: 12px;
        background: #e5e8ed;
        line-height: 48px;
    }

    .panel {
        margin-top: 64px;
        padding: 16px;
        border-radius: 24px;
        background: #e5e8ee;
    }

    .panel-body {
        padding: 32px;
        border-radius: 16px;
        background: #fafbfd;
        box-shadow: 0 8px 24px rgba(30, 41, 90, 0.1);
    }

    .panel-head {
        display: flex;
        align-items: center;
        height: 64px;
    }

    .collapse {
        display: flex;
        align-items: center;
        justify-content: center;
        width: 64px;
        height: 64px;
        border-radius: 16px;
        background: #eeeff1;
    }

    h2 {
        margin: 0 0 0 16px;
        font-size: 36px;
        font-weight: 500;
    }

    .panel-head .dot {
        margin: 0 34px;
    }

    .segment {
        display: flex;
        height: 64px;
        padding: 4px 3px;
        border-radius: 18px;
        background: #eeeff1;
        color: #525a6b;
    }

    .seg-item {
        display: flex;
        align-items: center;
        padding: 0 26px;
        border-radius: 14px;
    }

    .seg-item.divided {
        position: relative;
    }

    .seg-item.divided::before {
        content: '';
        position: absolute;
        top: 12px;
        left: 0;
        width: 2px;
        height: 32px;
        background: #dcdee2;
    }

    .seg-item.active {
        background: #fff;
        color: #0f172a;
        box-shadow: 0 4px 9px rgba(15, 23, 42, 0.2);
    }

    .panel-warning {
        margin-left: auto;
        color: #fb2c36;
    }

    .card {
        width: 782px;
        height: 796px;
        margin-top: 32px;
        padding: 32px;
        border-radius: 14px;
        background: #fae7e9;
        box-shadow: 0 6px 16px rgba(15, 23, 42, 0.09);
    }

    .card-top {
        display: flex;
        align-items: center;
        height: 96px;
    }

    .card-flag {
        display: flex;
        align-items: center;
        justify-content: center;
        width: 96px;
        height: 96px;
        margin-right: 16px;
        border-radius: 16px;
        background: linear-gradient(#f8edf1, #dcd0e4 30%, #bfb3d6 58%, #e8aab3 82%, #efa5a3);
    }

    .card-flag .flag {
        width: 50px;
        height: 34px;
        border-radius: 4px;
        box-shadow: 0 0 12px rgba(60, 50, 120, 0.2);
    }

    strong {
        font-weight: 500;
    }

    .view {
        display: flex;
        align-items: center;
        align-self: flex-start;
        gap: 8px;
        width: 145px;
        height: 64px;
        margin-left: auto;
        padding-left: 18px;
        border: 2px solid #dccbcf;
        border-radius: 16px;
        box-shadow: 0 5px 12px rgba(80, 40, 50, 0.1);
    }

    .card-total {
        display: flex;
        justify-content: space-between;
        align-items: flex-end;
        margin-top: 24px;
    }

    .total-label {
        color: #565b69;
    }

    .total-value {
        color: #fb2c36;
        font-size: 36px;
        font-weight: 500;
        line-height: 48px;
    }

    .negative {
        display: flex;
        gap: 14px;
        color: #fb2c36;
        font-size: 24px;
        letter-spacing: 0.75px;
        line-height: 32px;
    }

    .card-split {
        display: flex;
        gap: 63px;
        margin-top: 48px;
    }

    .split-bar {
        width: 32px;
        height: 264px;
        border-radius: 16px;
        background: #eddcde;
    }

    .entry {
        margin-bottom: 28px;
    }

    .entry-name,
    .child-name {
        display: flex;
        align-items: center;
        color: #565b69;
    }

    .entry-value {
        margin: 4px 0 0 25px;
        font-weight: 500;
    }

    .mark {
        width: 10px;
        height: 32px;
        margin-right: 15px;
        border-radius: 4px;
    }

    .mark.thin {
        width: 7px;
        height: 23px;
        margin: -4px 11px 0 0;
        border-radius: 3px;
    }

    .slate {
        background: #62748e;
    }

    .teal {
        background: #46ecd5;
    }

    .orange {
        background: #ffb86a;
    }

    .violet {
        background: #8e51ff;
    }

    .green {
        background: #00bc7d;
    }

    .children {
        display: flex;
        flex-direction: column;
        gap: 12px;
        margin: 12px 0 32px 51px;
        font-size: 24px;
        letter-spacing: 0.72px;
        line-height: 32px;
    }

    .child-value {
        margin-left: 18px;
    }

    .pagination {
        display: flex;
        justify-content: flex-end;
        align-items: center;
        gap: 16px;
        margin-top: 32px;
    }

    .pagination strong {
        margin-right: 81px;
    }

    .pagination button {
        display: flex;
        align-items: center;
        justify-content: center;
        height: 64px;
        border: 2px solid #e7e8eb;
        border-radius: 16px;
        color: #868a98;
    }

    .pagination .square {
        width: 64px;
    }

    .pagination .prev {
        gap: 12px;
        width: 192px;
    }

    .pagination .next {
        gap: 13px;
        width: 142px;
    }

    .fields {
        display: grid;
        grid-template-columns: repeat(3, 1fr);
        gap: 24px 32px;
        margin-top: 32px;
    }

    .fields.two {
        grid-template-columns: repeat(2, 1fr);
        margin-top: 24px;
    }

    .label {
        margin-bottom: 8px;
    }

    .label sup {
        color: #878c9a;
        font-size: inherit;
        line-height: 0;
        vertical-align: baseline;
    }

    .input {
        display: flex;
        align-items: center;
        height: 64px;
        padding: 0 26px;
        border-radius: 16px;
        background: #eeeff1;
        color: #565d6c;
    }

    .input .flag {
        width: 42px;
        height: 30px;
        margin: 0 16px 0 -2px;
        border-radius: 4px;
    }

    .input span {
        flex: 1;
    }

    .input .flag ~ .icon {
        color: #0f172a;
    }

    .address-head {
        gap: 17px;
        margin-top: 48px;
        padding-left: 33px;
    }
</style>
